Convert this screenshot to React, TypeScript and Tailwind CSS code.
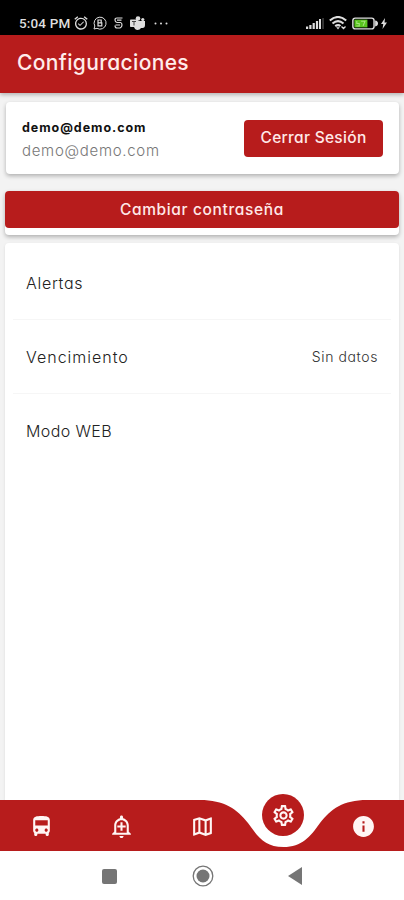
import {
	MdAlarmOn,
	MdDirectionsBus,
	MdInfo,
	MdOutlineAddAlert,
	MdOutlineMap,
	MdOutlineSettings
} from 'react-icons/md'
import type { IconType } from 'react-icons'

interface SettingRow {
	label: string
	tracking: string
	value?: string
}

const rows: SettingRow[] = [
	{ label: 'Alertas', tracking: 'tracking-[0.7px]' },
	{ label: 'Vencimiento', tracking: 'tracking-[1px]', value: 'Sin datos' },
	{ label: 'Modo WEB', tracking: 'tracking-[0.4px]' }
]

function StatusBar() {
	return (
		<div className="h-[35px] shrink-0 bg-black flex items-end justify-between pl-[19px] pr-[17px] pb-[4px] text-[#dedede]">
			<div className="flex items-center h-[16px]">
				<span className="w-[54px] text-[13.5px] leading-4 font-medium tracking-[0.15px] whitespace-nowrap font-['Roboto',sans-serif]">5:04 PM</span>
				<MdAlarmOn className="w-[16px] h-[16px]" />
				<svg className="ml-[4px] w-[14px] h-[14px]" viewBox="0 0 14 14" fill="none" stroke="currentColor" strokeWidth="1">
					<path d="M1 13l.8-3A6 6 0 1 1 4 12.3Z" />
					<path d="M5 4h3.2v2.8H5zM5 6.8h3.8v3H5z" strokeWidth="1.2" />
				</svg>
				<svg className="ml-[7px] w-[9px] h-[12px]" viewBox="0 0 9 12" fill="none" stroke="currentColor" strokeWidth="1.2">
					<path d="M8.500 1H3Q1 1 1 3t2 2.500h3.500Q8 5.800 8 8t-2 3H3Q1 11 1 8.500M3 3.200h4.500M1.500 8H6" />
				</svg>
				<svg className="ml-[7px] w-[15px] h-[14px]" viewBox="0 0 15 14" fill="currentColor">
					<circle cx="8" cy="2.500" r="2.300" />
					<circle cx="12.800" cy="3.500" r="1.600" />
					<path d="M5 5h10v4q0 3-2.500 3H11q-1 2-3.500 2T4 11Z" />
					<rect y="3.500" width="8" height="7.500" rx="0.800" />
					<path d="M2 5.500h4M4 5.500v4" stroke="#444" strokeWidth="1" />
				</svg>
				<svg className="ml-[9px] w-[14px] h-[3px]" viewBox="0 0 14 3" fill="currentColor">
					<circle cx="1.500" cy="1.500" r="1" />
					<circle cx="7" cy="1.500" r="1" />
					<circle cx="12.500" cy="1.500" r="1" />
				</svg>
			</div>
			<div className="flex items-center h-[16px]">
				<svg className="w-[18px] h-[12px]" viewBox="0 0 18 12" fill="currentColor">
					<path d="M0 9.500h2.200V12H0zM3.300 8h2.200v4H3.300zM6.600 6h2.200v6H6.600zM9.900 4h2.200v8H9.900zM13 2h2v10h-2z" />
					<path d="M16.300 1h1.500v11h-1.500z" fill="#444" />
				</svg>
				<svg className="ml-[5px] w-[18px] h-[14px]" viewBox="0 0 18 14" fill="none" stroke="currentColor" strokeWidth="2.100">
					<path d="M.8 4.500Q9-2.500 17.200 4.500M3.500 7.500Q9 2.800 14.500 7.500M6.200 10.200Q9 8 11.500 10" />
					<path d="M7.200 11.300h3.600L9 13.600Z" fill="currentColor" stroke="none" />
					<path d="M12.500 10.500l2 2 2-2" strokeWidth="1.300" />
				</svg>
				<svg className="ml-[5px] w-[26px] h-[13px]" viewBox="0 0 27 13">
					<rect x="0.900" y="0.900" width="22" height="11.200" rx="2.500" fill="none" stroke="currentColor" strokeWidth="1.500" />
					<path d="M24 3.500Q27 4 27 6.500T24 9.500Z" fill="currentColor" />
					<rect x="2.500" y="2.500" width="13.500" height="8" fill="#59c51f" />
					<path d="M5 4v2.500h2.500V9H4.500M9.500 4.200h4L11.500 9" fill="none" stroke="#a5e47c" strokeWidth="1.100" />
				</svg>
				<svg className="ml-[3px] w-[6px] h-[11px]" viewBox="0 0 6 11" fill="currentColor">
					<path d="M4 0L0 6h2.300L1.500 11 6 4.500H3.500Z" />
				</svg>
			</div>
		</div>
	)
}

function NavItem({ icon: Icon }: { icon: IconType }) {
	return (
		<button className="relative flex items-center justify-center text-[#fff5f4]">
			<Icon className="w-[25px] h-[25px]" />
		</button>
	)
}

function BottomNav() {
	return (
		<nav className="relative z-10 h-[51px] shrink-0 grid grid-cols-5 pl-px pt-px bg-white">
			{/* bar with the dip under the active tab */}
			<svg className="absolute inset-0 w-full h-full" viewBox="0 0 404 51" fill="#b71c1c">
				<path d="M0 0H200C224 0 237 9 248 23C258 37 265 47 283.500 47C302 47 310 37 320 23C331 9 343 0 367 0H404V51H0Z" />
			</svg>
			<NavItem icon={MdDirectionsBus} />
			<NavItem icon={MdOutlineAddAlert} />
			<NavItem icon={MdOutlineMap} />
			<button className="relative -top-[7px] place-self-start justify-self-center w-[42px] h-[42px] rounded-full bg-[#b71c1c] text-[#fff5f4] flex items-center justify-center">
				<MdOutlineSettings className="w-[25px] h-[25px]" />
			</button>
			<NavItem icon={MdInfo} />
		</nav>
	)
}

function SystemNav() {
	return (
		<div className="h-[49px] shrink-0 bg-white flex items-center pt-px px-[102px] justify-between text-[#757575]">
			<div className="w-[15px] h-[15px] rounded-[2px] bg-[#757575]" />
			<svg className="w-[22px] h-[22px]" viewBox="0 0 22 22">
				<circle cx="11" cy="11" r="9.800" fill="none" stroke="currentColor" strokeWidth="1.300" />
				<circle cx="11" cy="11" r="6.500" fill="currentColor" />
			</svg>
			<svg className="w-[14px] h-[18px]" viewBox="0 0 14 18" fill="currentColor">
				<path d="M14 0v18L0 9Z" />
			</svg>
		</div>
	)
}

export default function App() {
	return (
		<div className="h-[900px] w-[404px] flex flex-col overflow-hidden bg-[#f3f3f3] font-['Inter',sans-serif] [font-feature-settings:'cv11']">
			<StatusBar />
			<header className="relative h-[58px] shrink-0 bg-[#b71c1c] shadow-[0_2px_4px_rgba(0,0,0,0.25)] pl-[17px] pt-[12px]">
				<h1 className="text-[21px] leading-8 font-medium tracking-[0.35px] text-[#ffeceb]">Configuraciones</h1>
			</header>

			<main className="flex-1 min-h-0 flex flex-col px-[5px]">
				<section className="mt-[9px] ml-px h-[72px] shrink-0 bg-white rounded-[4px] shadow-[0_2px_4px_rgba(0,0,0,0.28)] flex items-center justify-between pl-[16px] pr-[16px]">
					<div className="pt-[3px]">
						<p className="text-[12.5px] leading-[22px] font-bold tracking-[0.95px] text-[#111]">demo@demo.com</p>
						<p className="text-[15px] leading-[23px] font-light tracking-[0.7px] text-[#777]">demo@demo.com</p>
					</div>
					<button className="w-[139px] h-[37px] rounded-[4px] bg-[#b71c1c] text-[#ffe9e8] text-[15.5px] font-medium tracking-[0.3px]">
						Cerrar Sesión
					</button>
				</section>

				<section className="mt-[17px] h-[44px] shrink-0 bg-white rounded-[4px] shadow-[0_2px_4px_rgba(0,0,0,0.28)]">
					<button className="w-full h-[37px] rounded-[4px] bg-[#b71c1c] text-[#ffe9e8] text-[15.5px] font-medium tracking-[0.65px]">
						Cambiar contraseña
					</button>
				</section>

				<section className="mt-[8px] flex-1 bg-white rounded-t-[4px] shadow-[0_1px_3px_rgba(0,0,0,0.1)] px-[8px] pt-[3px]">
					{rows.map((row, i) => (
						<div
							key={row.label}
							className={`h-[74px] flex items-center justify-between pl-[13px] pr-[13px] ${i < rows.length - 1 ? 'border-b border-[#f6f6f6]' : ''}`}
						>
							<span className={`text-[16px] font-light text-[#222] ${row.tracking}`}>{row.label}</span>
							{row.value && <span className="text-[14px] font-light tracking-[0.6px] text-[#333]">{row.value}</span>}
						</div>
					))}
				</section>
			</main>

			<BottomNav />
			<SystemNav />
		</div>
	)
}
